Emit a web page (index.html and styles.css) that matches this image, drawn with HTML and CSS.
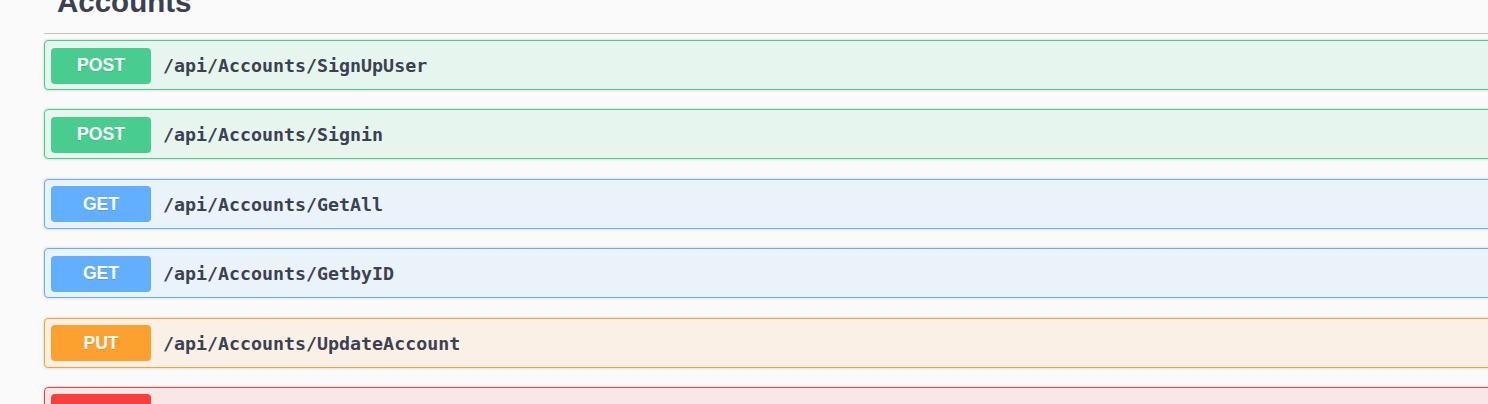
FILE: index.html
```html
<!DOCTYPE html>
<html lang="en">
<head>
<meta charset="utf-8">
<title>Accounts</title>
<link rel="stylesheet" href="styles.css">
</head>
<body>
<div class="wrapper">
  <div class="tag-section">
    <div class="tag-header">
      <h4 class="tag-title">Accounts</h4>
    </div>
    <div class="ops">
      <div class="opblock post">
        <span class="method">POST</span>
        <span class="path">/api/Accounts/SignUpUser</span>
      </div>
      <div class="opblock post">
        <span class="method">POST</span>
        <span class="path">/api/Accounts/Signin</span>
      </div>
      <div class="opblock get">
        <span class="method">GET</span>
        <span class="path">/api/Accounts/GetAll</span>
      </div>
      <div class="opblock get">
        <span class="method">GET</span>
        <span class="path">/api/Accounts/GetbyID</span>
      </div>
      <div class="opblock put">
        <span class="method">PUT</span>
        <span class="path">/api/Accounts/UpdateAccount</span>
      </div>
      <div class="opblock delete">
        <span class="method">DELETE</span>
        <span class="path">/api/Accounts/DeleteAccount</span>
      </div>
    </div>
  </div>
</div>
</body>
</html>
```

FILE: styles.css
```css
html, body {
  margin: 0;
  padding: 0;
  background: #fafafa;
  overflow: hidden;
}

.wrapper {
  padding-left: 44px;
  margin-right: -40px;
}

.tag-header {
  display: flow-root;
  box-sizing: border-box;
  height: 34px;
  border-bottom: 1px solid #c1c3c7;
  padding-left: 13px;
}

.tag-title {
  margin: -13px 0 0 0;
  font-family: "Liberation Sans", Arial, sans-serif;
  font-weight: 700;
  font-size: 29.5px;
  line-height: 29.5px;
  color: #3b4151;
}

.ops {
  padding-top: 6px;
  display: flex;
  flex-direction: column;
  gap: 19.4px;
}

.opblock {
  box-sizing: border-box;
  height: 50px;
  display: flex;
  align-items: center;
  padding: 1px 6px 0 6px;
  border: 1px solid;
  border-radius: 4px;
  box-shadow: 0 0 3px rgba(0, 0, 0, 0.19);
}

.method {
  box-sizing: border-box;
  width: 100px;
  height: 36px;
  display: flex;
  align-items: center;
  justify-content: center;
  border-radius: 4px;
  color: #fff;
  font-family: "Liberation Sans", Arial, sans-serif;
  font-weight: 700;
  font-size: 17.6px;
  text-shadow: 0 1px 0 rgba(0, 0, 0, 0.1);
}

.path {
  padding-left: 12px;
  font-family: "DejaVu Sans Mono", "Liberation Mono", monospace;
  font-weight: 700;
  font-size: 18.3px;
  color: #3b4151;
}

.post { border-color: #49cc90; background: rgba(73, 204, 144, 0.1); }
.post .method { background: #49cc90; }

.get { border-color: #61affe; background: rgba(97, 175, 254, 0.1); }
.get .method { background: #61affe; }

.put { border-color: #fca130; background: rgba(252, 161, 48, 0.1); }
.put .method { background: #fca130; }

.delete { border-color: #f93e3e; background: rgba(249, 62, 62, 0.1); }
.delete .method { background: #f93e3e; }
```
